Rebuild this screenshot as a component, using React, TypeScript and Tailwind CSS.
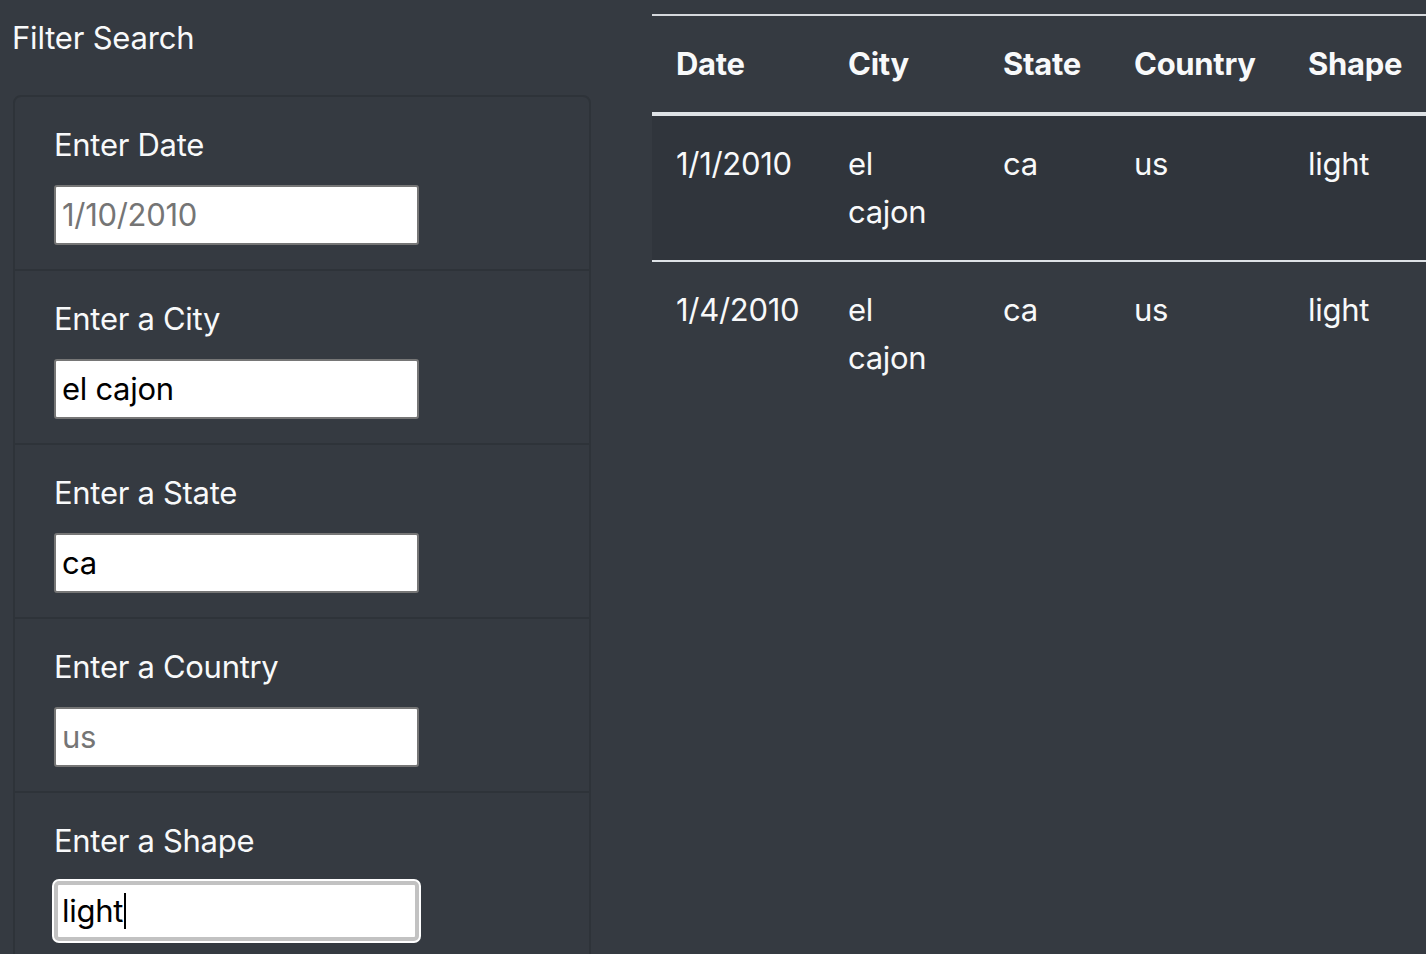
import React from "react";

const fields: { label: string; value: string; placeholder?: boolean; focused?: boolean }[] = [
  { label: "Enter Date", value: "1/10/2010", placeholder: true },
  { label: "Enter a City", value: "el cajon" },
  { label: "Enter a State", value: "ca" },
  { label: "Enter a Country", value: "us", placeholder: true },
  { label: "Enter a Shape", value: "light", focused: true },
];

const rows = [
  { date: "1/1/2010", city: "el cajon", state: "ca", country: "us", shape: "light" },
  { date: "1/4/2010", city: "el cajon", state: "ca", country: "us", shape: "light" },
];

export default function App() {
  return (
    <div
      className="w-[1426px] h-[954px] overflow-hidden bg-[#353a41] text-[#f8f9fa] flex"
      style={{ fontFamily: "Inter, 'Noto Sans', sans-serif" }}
    >
      <div className="w-[652px] shrink-0 pl-[12px]">
        <div className="mt-[20px] text-[31px] leading-[36px] tracking-[-0.2px]">Filter Search</div>
        <div className="mt-[39px] ml-[1px] w-[578px] border-2 border-[#2e3339] rounded-[8px]">
          {fields.map((f, i) => (
            <div
              key={f.label}
              className={`px-[39px] pt-[24px] pb-[24px] ${i < fields.length - 1 ? "border-b-2 border-[#2e3339]" : ""}`}
            >
              <div className="text-[31px] leading-[48px] tracking-[-0.3px] mb-[16px]">{f.label}</div>
              {f.focused ? (
                <div className="w-[369px] h-[64px] -ml-[2px] -mt-[2px] rounded-[7px] bg-white p-[2px]">
                  <div className="w-full h-full rounded-[5px] border-4 border-[#c2c2c2] bg-white flex items-center pl-[4px]">
                    <span className="text-[31px] text-black tracking-[-0.3px]">light</span>
                    <span className="inline-block w-[2px] h-[36px] bg-black ml-[1px]" />
                  </div>
                </div>
              ) : (
                <div className="w-[365px] h-[60px] rounded-[3px] border-2 border-[#767676] bg-white flex items-center pl-[6px]">
                  <span
                    className={`text-[31px] tracking-[-0.3px] ${f.placeholder ? "text-[#757575]" : "text-black"}`}
                  >
                    {f.value}
                  </span>
                </div>
              )}
            </div>
          ))}
        </div>
      </div>
      <div className="pt-[14px] shrink-0">
        <table className="table-fixed w-[778px] border-collapse text-[31px] leading-[48px] tracking-[-0.3px]">
          <colgroup>
            <col className="w-[172px]" />
            <col className="w-[155px]" />
            <col className="w-[131px]" />
            <col className="w-[174px]" />
            <col className="w-[146px]" />
          </colgroup>
          <thead>
            <tr className="border-t-2 border-t-[#d5d8dc] border-b-4 border-b-[#dee2e6]">
              {["Date", "City", "State", "Country", "Shape"].map((h) => (
                <th key={h} className="text-left font-bold px-[24px] py-[24px] align-top">
                  {h}
                </th>
              ))}
            </tr>
          </thead>
          <tbody>
            {rows.map((r, i) => (
              <tr
                key={i}
                className={`${i === 0 ? "bg-[#30353c] border-b-2 border-b-[#dee2e6]" : ""}`}
              >
                <td className="px-[24px] py-[24px] align-top">{r.date}</td>
                <td className="px-[24px] py-[24px] align-top break-words">{r.city}</td>
                <td className="px-[24px] py-[24px] align-top">{r.state}</td>
                <td className="px-[24px] py-[24px] align-top">{r.country}</td>
                <td className="px-[24px] py-[24px] align-top">{r.shape}</td>
              </tr>
            ))}
          </tbody>
        </table>
      </div>
    </div>
  );
}
